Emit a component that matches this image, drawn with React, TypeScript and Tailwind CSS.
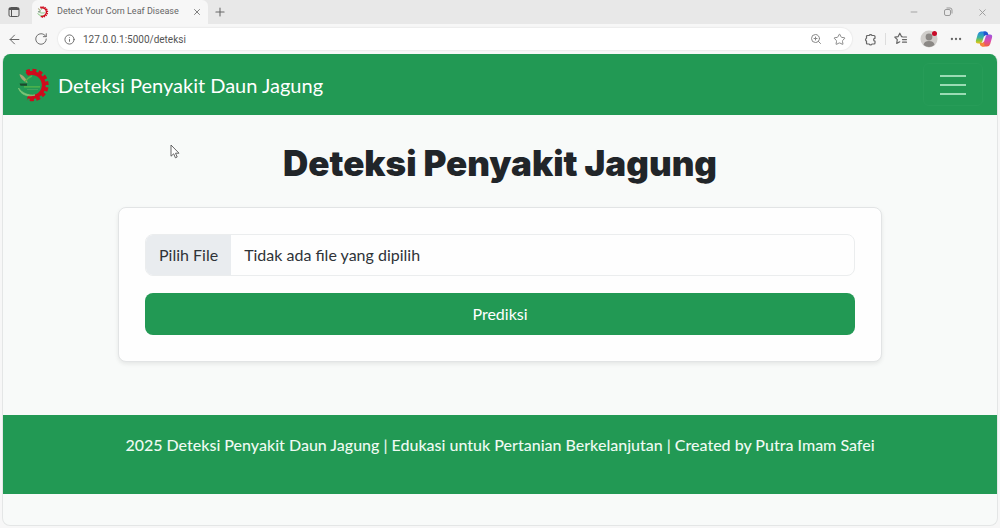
import { useState } from 'react'
import type { ReactNode } from 'react'
import {
  ArrowLeft,
  Info,
  Minus,
  MoreHorizontal,
  Plus,
  RotateCw,
  Star,
  X,
  ZoomIn,
} from 'lucide-react'

function Logo({ className }: { className: string }) {
  return (
    <svg viewBox="0 0 34 34" className={className} aria-hidden="true">
      {/* Gear */}
      <path
        d="M8.5 4.500A14 14 0 1 1 10 30.200L12 26.600A10 10 0 1 0 11 7.800Z"
        fill="#cf0a1c"
      />
      <path
        d="M9.500 4.100A14.200 14.200 0 1 1 10.500 30.300"
        fill="none"
        stroke="#cf0a1c"
        strokeWidth="4"
        strokeDasharray="3.800 2.300"
      />
      {/* Leaf and corn */}
      <path d="M2.500 6C6 7 10 11 10.500 15C6 13 3 10 2.500 6Z" fill="#a8a573" />
      <path d="M8 14C10 11 12 9 15 8" fill="none" stroke="#55b04c" strokeWidth="1.400" />
      <path d="M2.500 15.500H10V17.800H3.500Z" fill="#1d4a2c" />
      <path d="M7 18.800H23" stroke="#58b84a" strokeWidth="1.200" />
      <path d="M10 21.500H21" stroke="#4ba562" strokeWidth="0.800" />
      <path
        d="M1.500 20C3 26 10 29.500 18 27C11 27.700 5 25 1.500 20Z"
        fill="#7cc576"
        stroke="#7cc576"
        strokeWidth="0.800"
      />
    </svg>
  )
}

function CopilotIcon() {
  return (
    <svg viewBox="0 0 18 18" className="size-[18px]" aria-hidden="true">
      <defs>
        <linearGradient id="copilot-left" x1="0" y1="0" x2="0" y2="1">
          <stop offset="0" stopColor="#2387e6" />
          <stop offset="0.5" stopColor="#3bb3a0" />
          <stop offset="0.75" stopColor="#8cc63f" />
          <stop offset="1" stopColor="#f0c419" />
        </linearGradient>
        <linearGradient id="copilot-right" x1="0" y1="0" x2="0" y2="1">
          <stop offset="0" stopColor="#9a55e0" />
          <stop offset="0.5" stopColor="#d94bb0" />
          <stop offset="1" stopColor="#f4603d" />
        </linearGradient>
      </defs>
      <path
        d="M6 1.500H10.500Q12.300 1.500 12.800 3.300L13.300 5H11Q9.300 5 8.800 6.700L7.300 11.500Q6.700 13.500 5 13.500H3Q.2 13.500 1 10.200L2.800 4Q3.600 1.500 6 1.500Z"
        fill="url(#copilot-left)"
      />
      <path
        d="M12 16.500H7.500Q5.700 16.500 5.200 14.700L4.700 13H7Q8.700 13 9.200 11.300L10.700 6.500Q11.300 4.500 13 4.500H15Q17.800 4.500 17 7.800L15.200 14Q14.400 16.500 12 16.500Z"
        fill="url(#copilot-right)"
      />
      <path d="M8.500 1.500H10.500Q12.300 1.500 12.800 3.300L13.300 5H11Q9.500 5 8.900 6.500Z" fill="#2257cf" />
      <path d="M9.500 16.500H7.500Q5.700 16.500 5.200 14.700L4.700 13H7Q8.500 13 9.100 11.500Z" fill="#f5893a" />
    </svg>
  )
}

function IconButton({ label, children }: { label: string; children: ReactNode }) {
  return (
    <button type="button" aria-label={label} className="flex shrink-0 items-center justify-center">
      {children}
    </button>
  )
}

function TabBar() {
  return (
    <div className="flex h-6 items-stretch bg-[#e8e8e8] text-[#666]">
      <div className="flex w-8 items-center justify-center pr-1">
        <IconButton label="Tab actions">
          <svg viewBox="0 0 12 12" className="size-3" fill="none" stroke="#555" aria-hidden="true">
            <rect x="1" y="1.500" width="10" height="9" rx="1.500" />
            <path d="M1 2.500H11M1 3.500H11M3.500 3.500V10.500" />
          </svg>
        </IconButton>
      </div>
      <div className="flex w-44 items-center rounded-t-md bg-[#f7f7f7] px-1">
        <Logo className="ml-px size-3 shrink-0" />
        <span className="ml-2 flex-1 whitespace-nowrap font-[Roboto,sans-serif] text-[9px]">
          Detect Your Corn Leaf Disease
        </span>
        <IconButton label="Close tab">
          <X className="mr-[2px] size-[10px]" />
        </IconButton>
      </div>
      <div className="ml-1 flex w-4 items-center justify-center">
        <IconButton label="New tab">
          <Plus className="size-[14px]" strokeWidth={1.8} />
        </IconButton>
      </div>
      <div className="ml-auto flex items-center gap-6 pr-3 text-[#999]">
        <IconButton label="Minimize">
          <Minus className="size-[10px]" />
        </IconButton>
        <IconButton label="Restore">
          <svg viewBox="0 0 10 10" className="size-[10px]" fill="none" stroke="currentColor" aria-hidden="true">
            <rect x="1.500" y="2.500" width="6" height="6" rx="1.500" />
            <path d="M3.500 1H7Q9 1 9 3V6.500" />
          </svg>
        </IconButton>
        <IconButton label="Close window">
          <X className="size-[11px]" />
        </IconButton>
      </div>
    </div>
  )
}

function AddressBar() {
  return (
    <div className="flex h-[30px] items-center pr-[7px] pl-[7px] text-[#666]">
      <IconButton label="Back">
        <ArrowLeft className="size-[15px]" strokeWidth={1.6} />
      </IconButton>
      <div className="ml-3 flex">
        <IconButton label="Reload">
          <RotateCw className="size-[14px]" strokeWidth={1.6} />
        </IconButton>
      </div>
      <div className="ml-[10px] flex h-[22px] flex-1 items-center gap-2 rounded-full bg-white pr-[6px] pl-[6px] shadow-[0_0_1px_1px_#ececec]">
        <Info className="size-[11px] shrink-0" />
        <input
          type="text"
          aria-label="Address"
          defaultValue="127.0.0.1:5000/deteksi"
          className="min-w-0 flex-1 font-[Roboto,sans-serif] text-[10px] text-[#555] outline-none"
        />
        <ZoomIn className="size-3 text-[#888]" />
        <Star className="ml-[3px] size-[13px] text-[#888]" strokeWidth={1.8} />
      </div>
      <div className="ml-3 flex items-center">
        <IconButton label="Extensions">
          <svg viewBox="0 0 13 13" className="size-[13px]" fill="none" stroke="currentColor" strokeWidth="1.200" strokeLinejoin="round" aria-hidden="true">
            <path d="M3.500 2.500H5.200A1.500 1.500 0 0 1 8 2.500H10Q11 2.500 11 3.500V5.300A1.400 1.400 0 0 0 11 8.100V10Q11 11 10 11H8A1.500 1.500 0 0 1 5.200 11H3.500Q2.500 11 2.500 10V8.100A1.500 1.500 0 0 1 2.500 5.300V3.500Q2.500 2.500 3.500 2.500Z" />
          </svg>
        </IconButton>
        <span className="mx-2 h-3 w-px bg-[#ddd]" />
        <IconButton label="Favorites">
          <svg viewBox="0 0 14 14" className="size-[14px]" fill="none" stroke="currentColor" strokeWidth="1.200" strokeLinejoin="round" strokeLinecap="round" aria-hidden="true">
            <path d="M8.500 4.800 7.500 4.600 5.800 1.200 4.200 4.600 .8 5.100 3.300 7.600 2.700 11.400 5.800 9.800M9.500 5H12.500M8.500 7.600H12.500M8.500 10.200H12.500" />
          </svg>
        </IconButton>
        <div className="relative ml-3 flex">
          <IconButton label="Profile">
            <svg viewBox="0 0 18 18" className="size-[18px]" aria-hidden="true">
              <circle cx="9" cy="9" r="8.500" fill="#cfcdca" />
              <circle cx="9" cy="7" r="3.400" fill="#8b8885" />
              <path d="M3.500 15Q4 11 9 11T14.500 15Q9 19 3.500 15Z" fill="#8b8885" />
            </svg>
          </IconButton>
          <span className="absolute top-px right-px size-[5px] rounded-full bg-[#c80a28]" />
        </div>
        <div className="ml-[11px] flex">
          <IconButton label="Settings">
            <MoreHorizontal className="size-[14px]" />
          </IconButton>
        </div>
        <div className="ml-3 flex">
          <IconButton label="Copilot">
            <CopilotIcon />
          </IconButton>
        </div>
      </div>
    </div>
  )
}

function Navbar() {
  return (
    <nav className="flex h-[61px] items-center justify-between bg-[#229954] px-[14px]">
      <a href="#" className="flex items-center gap-[7px] text-[20px] text-white">
        <Logo className="size-[34px]" />
        Deteksi Penyakit Daun Jagung
      </a>
      <button
        type="button"
        aria-label="Toggle navigation"
        className="flex h-[43px] w-[60px] flex-col items-center justify-center gap-[7px] rounded-md border border-[#279c58]"
      >
        <span className="h-[2px] w-[26px] bg-[#9bdcb4]" />
        <span className="h-[2px] w-[26px] bg-[#9bdcb4]" />
        <span className="h-[2px] w-[26px] bg-[#9bdcb4]" />
      </button>
    </nav>
  )
}

function DetectionForm() {
  const [fileName, setFileName] = useState('')

  return (
    <form
      onSubmit={(e) => e.preventDefault()}
      className="mt-[22px] flex flex-col gap-[17px] rounded-lg border border-[#e2e4e5] bg-[#fefefe] p-[26px] shadow-[0_2px_4px_rgba(0,0,0,0.08)]"
    >
      <label
        htmlFor="leaf-image"
        className="flex h-[42px] cursor-pointer items-stretch overflow-hidden rounded-lg border border-[#ebedee] text-[#2f3338]"
      >
        <span className="flex items-center bg-[#e9ecef] px-[13px]">Pilih File</span>
        <span className="flex items-center px-[13px]">
          {fileName || 'Tidak ada file yang dipilih'}
        </span>
        <input
          id="leaf-image"
          type="file"
          accept="image/*"
          className="sr-only"
          onChange={(e) => setFileName(e.target.files?.[0]?.name ?? '')}
        />
      </label>
      <button type="submit" className="h-[42px] rounded-lg bg-[#229954] text-white">
        Prediksi
      </button>
    </form>
  )
}

export default function App() {
  return (
    <div className="flex min-h-screen flex-col bg-[#f7f7f7]">
      <TabBar />
      <AddressBar />
      <div className="mx-[2px] mb-[2px] flex flex-1 flex-col overflow-hidden rounded-lg border-x border-b border-[#e4e6e6] bg-[#f8faf9] font-[Lato,sans-serif] text-[16px]">
        <Navbar />
        <main className="mx-auto w-full max-w-[764px] pt-[26px] pb-[53px]">
          <h1 className="text-center font-[Inter,sans-serif] text-[35px] leading-[44px] font-black text-[#212529]">
            Deteksi Penyakit Jagung
          </h1>
          <DetectionForm />
        </main>
        <footer className="h-[79px] bg-[#229954] px-4 pt-[18px] text-center font-medium text-[#eefaf2]">
          <p>
            2025 Deteksi Penyakit Daun Jagung | Edukasi untuk Pertanian Berkelanjutan | Created by
            Putra Imam Safei
          </p>
        </footer>
      </div>
      {/* Pointer */}
      <svg viewBox="0 0 10 15" className="pointer-events-none absolute top-[144px] left-[170px] h-[15px] w-[10px]" aria-hidden="true">
        <path d="M1 1V12.200L3.700 9.800 5.400 13.800 7.200 13 5.500 9.200H9Z" fill="#fff" stroke="#555" strokeWidth="0.900" />
      </svg>
    </div>
  )
}
